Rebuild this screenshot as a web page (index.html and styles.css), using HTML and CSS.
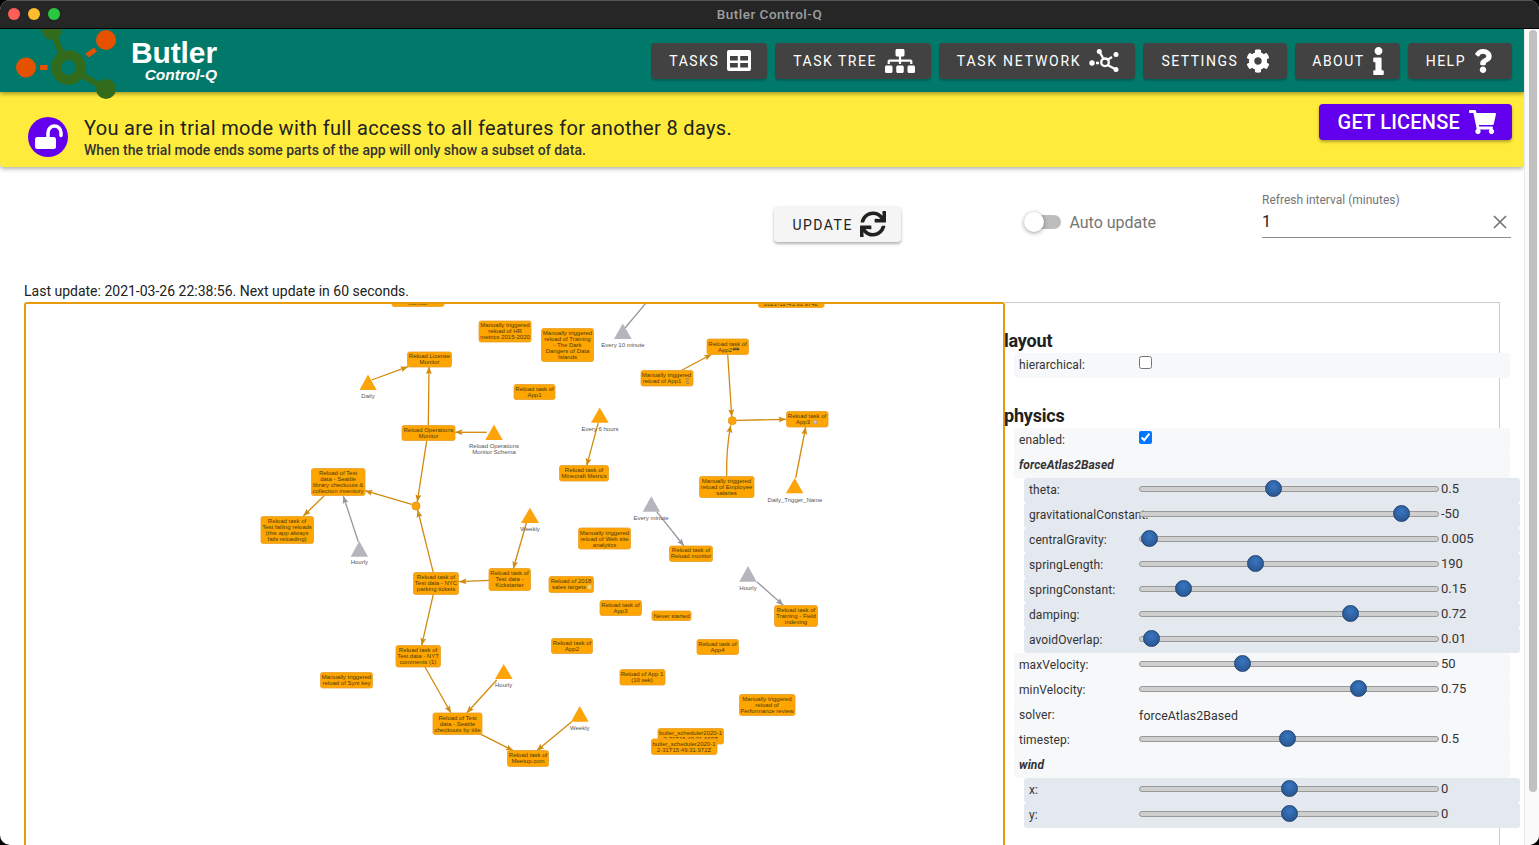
FILE: index.html
```html
<!DOCTYPE html>
<html lang="en">
<head>
    <meta charset="UTF-8">
    <title>Butler Control-Q</title>
    <link rel="stylesheet" href="styles.css">
</head>
<body>
<div class="window">
    <div class="titlebar">
        <div class="lights"><span class="light red"></span><span class="light yellow"></span><span class="light green"></span></div>
        <div class="window-title">Butler Control-Q</div>
    </div>
    <div class="client">
        <div class="page">
            <header class="appbar">
                <svg class="logo" viewBox="0 29 120 72" width="120" height="72">
                    <line x1="52" y1="30" x2="62" y2="55" class="logo-line"/>
                    <line x1="80" y1="74" x2="106" y2="89" class="logo-line"/>
                    <circle cx="52" cy="30" r="10" class="logo-green"/>
                    <circle cx="106" cy="89" r="10" class="logo-green"/>
                    <circle cx="68.500" cy="67.500" r="12.300" class="logo-ring"/>
                    <circle cx="106" cy="40" r="10" class="logo-orange"/>
                    <circle cx="26" cy="67.500" r="10" class="logo-orange"/>
                    <line x1="40" y1="67.500" x2="47.500" y2="67.500" class="logo-dash"/>
                    <line x1="87" y1="55.500" x2="95.500" y2="49.500" class="logo-dash"/>
                </svg>
                <div class="brand">
                    <div class="brand-name">Butler</div>
                    <div class="brand-sub">Control-Q</div>
                </div>
                <nav class="nav">
                    <button class="nav-btn">TASKS
                        <svg class="icon-table" viewBox="0 0 24 21"><path fill-rule="evenodd" d="M2 0h20a2 2 0 0 1 2 2v17a2 2 0 0 1-2 2H2a2 2 0 0 1-2-2V2a2 2 0 0 1 2-2zM3 6v4.500h7.800V6zm10.200 0v4.500H21V6zM3 13v4.500h7.800V13zm10.200 0v4.500H21V13z"/></svg>
                    </button>
                    <button class="nav-btn">TASK TREE
                        <svg class="icon-tree" viewBox="0 0 640 512"><path d="M128 352H32c-17.670 0-32 14.330-32 32v96c0 17.670 14.330 32 32 32h96c17.670 0 32-14.330 32-32v-96c0-17.670-14.330-32-32-32zm-24-80h192v48h48v-48h192v48h48v-57.590c0-21.170-17.230-38.410-38.410-38.410H344v-64h40c17.670 0 32-14.330 32-32V32c0-17.670-14.330-32-32-32H256c-17.670 0-32 14.330-32 32v96c0 17.670 14.330 32 32 32h40v64H94.410C73.230 224 56 241.230 56 262.410V320h48v-48zm264 80h-96c-17.670 0-32 14.330-32 32v96c0 17.670 14.330 32 32 32h96c17.670 0 32-14.330 32-32v-96c0-17.670-14.330-32-32-32zm240 0h-96c-17.670 0-32 14.330-32 32v96c0 17.670 14.330 32 32 32h96c17.670 0 32-14.330 32-32v-96c0-17.670-14.330-32-32-32z"/></svg>
                    </button>
                    <button class="nav-btn wide">TASK NETWORK
                        <svg class="icon-net" viewBox="0 0 30 23">
                            <circle cx="10.300" cy="2.500" r="2.500"/><circle cx="27" cy="5.500" r="2.500"/><circle cx="3" cy="14" r="2.700"/><circle cx="27" cy="20.500" r="2.500"/>
                            <path class="net-stroke" d="M10.300 2.500L14 9M18.500 16L27 20.500M19 10.500L23 8M7 14h3"/>
                            <circle class="net-stroke" cx="16" cy="13.300" r="3.800"/>
                        </svg>
                    </button>
                    <button class="nav-btn">SETTINGS
                        <svg class="icon-gear" viewBox="0 0 512 512"><path d="M487.400 315.700l-42.600-24.600c4.300-23.200 4.300-47 0-70.200l42.600-24.600c4.900-2.800 7.100-8.600 5.500-14-11.100-35.600-30-67.800-54.700-94.600-3.800-4.100-10-5.100-14.800-2.300L380.800 110c-17.900-15.400-38.500-27.300-60.800-35.100V25.800c0-5.600-3.900-10.500-9.400-11.700-36.700-8.200-74.300-7.800-109.200 0-5.500 1.200-9.400 6.100-9.400 11.700V75c-22.200 7.900-42.800 19.800-60.800 35.100L88.700 85.500c-4.900-2.800-11-1.900-14.800 2.300-24.700 26.700-43.600 58.900-54.700 94.600-1.700 5.400.6 11.200 5.500 14L67.300 221c-4.300 23.200-4.300 47 0 70.200l-42.600 24.600c-4.900 2.800-7.100 8.600-5.500 14 11.100 35.600 30 67.800 54.700 94.600 3.800 4.100 10 5.100 14.800 2.300l42.600-24.600c17.900 15.400 38.500 27.300 60.800 35.100v49.200c0 5.600 3.900 10.500 9.400 11.700 36.700 8.200 74.300 7.800 109.200 0 5.500-1.200 9.400-6.100 9.400-11.700v-49.200c22.200-7.900 42.800-19.800 60.800-35.100l42.600 24.600c4.900 2.800 11 1.900 14.800-2.300 24.700-26.700 43.600-58.900 54.700-94.600 1.500-5.500-.7-11.300-5.600-14.100zM256 336c-44.100 0-80-35.900-80-80s35.900-80 80-80 80 35.900 80 80-35.900 80-80 80z"/></svg>
                    </button>
                    <button class="nav-btn about">ABOUT
                        <svg class="icon-info" viewBox="0 0 192 512"><path d="M20 424.229h20V279.771H20c-11.046 0-20-8.954-20-20V212c0-11.046 8.954-20 20-20h112c11.046 0 20 8.954 20 20v212.229h20c11.046 0 20 8.954 20 20V492c0 11.046-8.954 20-20 20H20c-11.046 0-20-8.954-20-20v-47.771c0-11.046 8.954-20 20-20zM96 0C56.235 0 24 32.235 24 72s32.235 72 72 72 72-32.235 72-72S135.764 0 96 0z"/></svg>
                    </button>
                    <button class="nav-btn help">HELP
                        <svg class="icon-help" viewBox="0 0 384 512"><path d="M202.021 0C122.202 0 70.503 32.703 29.914 91.026c-7.363 10.580-5.093 25.086 5.178 32.874l43.138 32.709c10.373 7.865 25.132 6.026 33.253-4.148 25.049-31.381 43.630-49.449 82.757-49.449 30.764 0 68.816 19.799 68.816 49.631 0 22.552-18.617 34.134-48.993 51.164-35.423 19.860-82.299 44.576-82.299 106.405V320c0 13.255 10.745 24 24 24h72.471c13.255 0 24-10.745 24-24v-5.773c0-42.860 125.268-44.645 125.268-160.627C377.504 66.256 286.902 0 202.021 0zM192 373.459c-38.196 0-69.271 31.075-69.271 69.271 0 38.195 31.075 69.270 69.271 69.270s69.271-31.075 69.271-69.271-31.075-69.270-69.271-69.270z"/></svg>
                    </button>
                </nav>
            </header>

            <section class="banner">
                <div class="banner-badge">
                    <svg viewBox="0 0 40 40" width="40" height="40">
                        <path class="shackle" d="M20 23v-7.500a6.500 6.500 0 0 1 13 0v3"/>
                        <rect x="7" y="20" width="21" height="12" rx="2.500" class="lock-body"/>
                    </svg>
                </div>
                <div class="banner-text">
                    <div class="banner-title">You are in trial mode with full access to all features for another 8 days.</div>
                    <div class="banner-sub">When the trial mode ends some parts of the app will only show a subset of data.</div>
                </div>
                <button class="license-btn">GET LICENSE
                    <svg viewBox="0 0 576 512" width="27" height="24"><path d="M528.120 301.319l47.273-208C578.806 78.301 567.391 64 551.990 64H159.208l-9.166-44.810C147.758 8.021 137.930 0 126.529 0H24C10.745 0 0 10.745 0 24v16c0 13.255 10.745 24 24 24h69.883l70.248 343.435C147.325 417.100 136 435.222 136 456c0 30.928 25.072 56 56 56s56-25.072 56-56c0-15.674-6.447-29.835-16.824-40h209.647C430.447 426.165 424 440.326 424 456c0 30.928 25.072 56 56 56s56-25.072 56-56c0-22.172-12.888-41.332-31.579-50.405l5.517-24.276c3.413-15.018-8.002-29.319-23.403-29.319H218.117l-6.545-32h293.145c11.206 0 20.920-7.754 23.403-18.681z"/></svg>
                </button>
            </section>

            <section class="toolbar">
                <button class="update-btn"><span class="update-label">UPDATE</span>
                    <svg viewBox="0 0 512 512" width="26" height="26"><path d="M440.650 12.570l4 82.770A247.160 247.160 0 0 0 255.830 8C134.730 8 33.910 94.920 12.290 209.820A12 12 0 0 0 24.090 224h49.050a12 12 0 0 0 11.670-9.260 175.910 175.910 0 0 1 317-56.940l-101.460-4.860a12 12 0 0 0-12.570 12v47.410a12 12 0 0 0 12 12H500a12 12 0 0 0 12-12V12a12 12 0 0 0-12-12h-47.370a12 12 0 0 0-11.980 12.570zM255.830 432a175.610 175.610 0 0 1-146-77.800l101.800 4.870a12 12 0 0 0 12.570-12v-47.400a12 12 0 0 0-12-12H12a12 12 0 0 0-12 12V500a12 12 0 0 0 12 12h47.350a12 12 0 0 0 12-12.600l-4.150-82.570A247.170 247.170 0 0 0 255.830 504c121.110 0 221.930-86.920 243.550-201.820a12 12 0 0 0-11.800-14.180h-49.050a12 12 0 0 0-11.670 9.260A175.860 175.860 0 0 1 255.830 432z"/></svg>
                </button>
                <div class="auto-update">
                    <span class="switch"><span class="switch-thumb"></span></span>
                    <span class="auto-label">Auto update</span>
                </div>
                <div class="refresh-field">
                    <div class="refresh-label">Refresh interval (minutes)</div>
                    <div class="refresh-value">
                        <span>1</span>
                        <svg viewBox="0 0 14 14" width="14" height="14"><path d="M1 1l12 12M13 1L1 13"/></svg>
                    </div>
                </div>
            </section>

            <div class="status">Last update: 2021-03-26 22:38:56. Next update in 60 seconds.</div>

            <section class="workspace">
                <div class="graph">
                    <svg class="network" viewBox="26 304 977 560" width="977" height="560">
                        <defs>
                            <marker id="arrow" markerUnits="userSpaceOnUse" markerWidth="8" markerHeight="7" refX="7.500" refY="3.500" orient="auto"><path d="M0 0.500L7.500 3.500L0 6.500L1.500 3.500z" fill="#d18a0c"/></marker>
                            <marker id="arrow-gray" markerUnits="userSpaceOnUse" markerWidth="8" markerHeight="7" refX="7.500" refY="3.500" orient="auto"><path d="M0 0.500L7.500 3.500L0 6.500L1.500 3.500z" fill="#9696a0"/></marker>
                        </defs>

                        <g class="edges">
                            <path d="M371.700 380L408 366.700"/>
                            <path d="M428.300 425.700L429 366.700"/>
                            <path d="M486.700 432.300L455 432.300"/>
                            <path d="M426.700 440.700L417.300 502"/>
                            <path d="M411.700 504.300L365 490.700"/>
                            <path d="M324 496L303.300 516"/>
                            <path d="M433.300 572.700L417.700 510"/>
                            <path d="M526.700 521.700L513.300 568.700"/>
                            <path d="M489 580.300L459 581.700"/>
                            <path d="M433.300 594.300L421.700 645.300"/>
                            <path d="M425 667L451 713"/>
                            <path d="M496.700 680L466.700 713"/>
                            <path d="M481 734.300L513.300 750.700"/>
                            <path d="M571.700 721.700L536.700 750.700"/>
                            <path d="M598.300 422.700L586.700 465.700"/>
                            <path d="M681.700 370.300L711.700 354.300"/>
                            <path d="M727.700 354.300L731.700 416.700"/>
                            <path d="M736.700 420.300L786 419.300"/>
                            <path d="M726.700 476.300Q726 450 730.700 425.300"/>
                            <path d="M795.700 478L805.700 427"/>
                        </g>
                        <g class="edges gray">
                            <path d="M358.300 541.700L343.300 496"/>
                            <path d="M656.700 511.700L684 546"/>
                            <path d="M756.700 581.700L783.300 605.300"/>
                            <path class="plain" d="M625 328L646 303"/>
                        </g>

                        <circle class="dot" cx="416" cy="506" r="4"/>
                        <circle class="dot" cx="732.300" cy="420.700" r="4"/>

                        <g class="node">
                            <rect x="392" y="290" width="52" height="16.500" rx="2"/>
                            <text x="418" y="304.500">Monitor</text>
                            <rect x="758.500" y="290" width="65.500" height="17.500" rx="2"/>
                            <text x="791" y="305.500">2021-12-45:31.974Z</text>
                            <rect x="479" y="321" width="52" height="21" rx="2"/>
                            <text x="505" y="327">Manually triggered<tspan x="505" dy="6">reload of HR</tspan><tspan x="505" dy="6">metrics 2015-2020</tspan></text>
                            <rect x="541.500" y="328.500" width="52" height="33" rx="2"/>
                            <text x="567.500" y="335">Manually triggered<tspan x="567.500" dy="6">reload of Training</tspan><tspan x="567.500" dy="6">- The Dark</tspan><tspan x="567.500" dy="6">Dangers of Data</tspan><tspan x="567.500" dy="6">Islands</tspan></text>
                            <rect x="707" y="339" width="41.500" height="15.500" rx="2"/>
                            <text x="727.500" y="345.500">Reload task of<tspan x="725" dy="6">App2</tspan></text>
                            <rect x="407.500" y="352" width="44" height="15" rx="2"/>
                            <text x="429.500" y="358">Reload License<tspan x="429.500" dy="6">Monitor</tspan></text>
                            <rect x="641" y="370.500" width="52" height="15.500" rx="2"/>
                            <text x="666.500" y="376.500">Manually triggered<tspan x="662" dy="6">reload of App1</tspan></text>
                            <rect x="514" y="384.500" width="41" height="15" rx="2"/>
                            <text x="534.500" y="391">Reload task of<tspan x="534.500" dy="6">App1</tspan></text>
                            <rect x="786.500" y="411.500" width="41.500" height="15.500" rx="2"/>
                            <text x="807" y="418">Reload task of<tspan x="803" dy="6">App3</tspan></text>
                            <rect x="402" y="425.500" width="53" height="15" rx="2"/>
                            <text x="428.500" y="432">Reload Operations<tspan x="428.500" dy="6">Monitor</tspan></text>
                            <rect x="559.500" y="465.500" width="49" height="15.500" rx="2"/>
                            <text x="584" y="472">Reload task of<tspan x="584" dy="6">Minecraft Metrics</tspan></text>
                            <rect x="311.500" y="468.500" width="53.500" height="27" rx="2"/>
                            <text x="338" y="474.500">Reload of Test<tspan x="338" dy="6">data - Seattle</tspan><tspan x="338" dy="6">library checkouts &amp;</tspan><tspan x="338" dy="6">collection inventory</tspan></text>
                            <rect x="699.500" y="476.500" width="54.500" height="21" rx="2"/>
                            <text x="726.500" y="483">Manually triggered<tspan x="726.500" dy="6">reload of Employee</tspan><tspan x="726.500" dy="6">salaries</tspan></text>
                            <rect x="261" y="516.500" width="52.500" height="27" rx="2"/>
                            <text x="287" y="523">Reload task of<tspan x="287" dy="6">Test failing reloads</tspan><tspan x="287" dy="6">(this app always</tspan><tspan x="287" dy="6">fails reloading)</tspan></text>
                            <rect x="578.500" y="528" width="52" height="21" rx="2"/>
                            <text x="604.500" y="534.500">Manually triggered<tspan x="604.500" dy="6">reload of Web site</tspan><tspan x="604.500" dy="6">analytics</tspan></text>
                            <rect x="669.500" y="546" width="43" height="15.500" rx="2"/>
                            <text x="691" y="552">Reload task of<tspan x="691" dy="6">Reload monitor</tspan></text>
                            <rect x="489" y="568.500" width="41.500" height="22" rx="2"/>
                            <text x="509.500" y="575">Reload task of<tspan x="509.500" dy="6">Test data -</tspan><tspan x="509.500" dy="6">Kickstarter</tspan></text>
                            <rect x="413.500" y="572.500" width="45" height="22" rx="2"/>
                            <text x="436" y="579">Reload task of<tspan x="436" dy="6">Test data - NYC</tspan><tspan x="436" dy="6">parking tickets</tspan></text>
                            <rect x="549" y="576.500" width="44.500" height="16" rx="2"/>
                            <text x="571" y="583">Reload of 2018<tspan x="569" dy="6">sales targets</tspan></text>
                            <rect x="600" y="600.500" width="41.500" height="15" rx="2"/>
                            <text x="620.500" y="607">Reload task of<tspan x="620.500" dy="6">App3</tspan></text>
                            <rect x="774.500" y="605.500" width="43" height="21" rx="2"/>
                            <text x="796" y="611.500">Reload task of<tspan x="796" dy="6">Training - Field</tspan><tspan x="796" dy="6">indexing</tspan></text>
                            <rect x="652" y="611" width="39" height="9.500" rx="2"/>
                            <text x="671.500" y="617.500">Never started</text>
                            <rect x="551.500" y="638.500" width="41" height="15" rx="2"/>
                            <text x="572" y="645">Reload task of<tspan x="572" dy="6">App2</tspan></text>
                            <rect x="697" y="639.500" width="41.500" height="15" rx="2"/>
                            <text x="717.500" y="646">Reload task of<tspan x="717.500" dy="6">App4</tspan></text>
                            <rect x="396" y="645.500" width="44.500" height="21.500" rx="2"/>
                            <text x="418" y="652">Reload task of<tspan x="418" dy="6">Test data - NYT</tspan><tspan x="418" dy="6">comments (1)</tspan></text>
                            <rect x="620" y="669.500" width="45" height="15.500" rx="2"/>
                            <text x="642" y="676">Reload of App 1<tspan x="642" dy="6">(10 sek)</tspan></text>
                            <rect x="320.500" y="672.500" width="52" height="15.500" rx="2"/>
                            <text x="346.500" y="679">Manually triggered<tspan x="346.500" dy="6">reload of Synt key</tspan></text>
                            <rect x="739.500" y="694.500" width="55.500" height="21" rx="2"/>
                            <text x="767" y="701">Manually triggered<tspan x="767" dy="6">reload of</tspan><tspan x="767" dy="6">Performance review</tspan></text>
                            <rect x="433" y="713" width="49" height="21.500" rx="2"/>
                            <text x="457.500" y="719.500">Reload of Test<tspan x="457.500" dy="6">data - Seattle</tspan><tspan x="457.500" dy="6">checkouts by title</tspan></text>
                            <rect x="658" y="728.500" width="65.500" height="15.500" rx="2"/>
                            <text x="690.500" y="735">butler_scheduler2020-1<tspan x="690.500" dy="6">2-31T15:49:31.669Z</tspan></text>
                            <rect x="651.500" y="739" width="65.500" height="15.500" rx="2"/>
                            <text x="684" y="745.500">butler_scheduler2020-1<tspan x="684" dy="6">2-31T15:49:31.972Z</tspan></text>
                            <rect x="507.500" y="750.500" width="41" height="16" rx="2"/>
                            <text x="528" y="757">Reload task of<tspan x="528" dy="6">Meetup.com</tspan></text>
                        </g>

                        <!-- small emoji in the node names -->
                        <path d="M733 348h6M733 348.500v1.500h2.500v-1.500M736.500 348.500v1.500h2.500v-1.500" class="emoji-dark"/>
                        <path d="M686 378.500h3l-3 5h3z" class="emoji-glass"/>
                        <circle cx="815" cy="422" r="2" class="emoji-gray"/>
                        <circle cx="589.500" cy="587" r="2.200" class="emoji-yellow"/>

                        <g class="trigger">
                            <polygon points="368,374.500 359.500,390 376.700,390"/>
                            <text x="368" y="397.500">Daily</text>
                            <polygon points="494,424.500 485.300,440 502.700,440"/>
                            <text x="494" y="448">Reload Operations<tspan x="494" dy="6">Monitor Schema</tspan></text>
                            <polygon points="599.700,407.500 591,422.700 608.700,422.700"/>
                            <text x="600" y="431">Every 6 hours</text>
                            <polygon points="794.700,478 786,493.300 803.300,493.300"/>
                            <text x="795" y="502">Daily_Trigger_Name</text>
                            <polygon points="530,507.700 521,523 539,523"/>
                            <text x="530" y="531">Weekly</text>
                            <polygon points="503.700,664 495,679 512.700,679"/>
                            <text x="503.700" y="687">Hourly</text>
                            <polygon points="579.700,706 571,721.700 588.700,721.700"/>
                            <text x="579.700" y="730">Weekly</text>
                        </g>
                        <g class="trigger off">
                            <polygon points="622.700,323.500 614,339 631.700,339"/>
                            <text x="623" y="347">Every 10 minute</text>
                            <polygon points="651.300,496.300 642.700,511.700 660,511.700"/>
                            <text x="651" y="520">Every minute</text>
                            <polygon points="359.300,541 350.700,556.700 368,556.700"/>
                            <text x="359.300" y="564">Hourly</text>
                            <polygon points="748,566 739.300,581.700 756.700,581.700"/>
                            <text x="748" y="590">Hourly</text>
                        </g>
                    </svg>
                </div>

                <div class="config">
                    <h3 class="config-head first">layout</h3>
                    <div class="row"><span class="row-label">hierarchical:</span><input type="checkbox"></div>
                    <h3 class="config-head">physics</h3>
                    <div class="row"><span class="row-label">enabled:</span><input type="checkbox" checked></div>
                    <div class="row"><span class="row-label group">forceAtlas2Based</span></div>
                    <div class="row sub"><span class="row-label">theta:</span><input type="range" value="44.400"><span class="row-value">0.5</span></div>
                    <div class="row sub"><span class="row-label">gravitationalConstant:</span><input type="range" value="90.100"><span class="row-value">-50</span></div>
                    <div class="row sub"><span class="row-label">centralGravity:</span><input type="range" value="0.300"><span class="row-value">0.005</span></div>
                    <div class="row sub"><span class="row-label">springLength:</span><input type="range" value="38"><span class="row-value">190</span></div>
                    <div class="row sub"><span class="row-label">springConstant:</span><input type="range" value="12.400"><span class="row-value">0.15</span></div>
                    <div class="row sub"><span class="row-label">damping:</span><input type="range" value="71.900"><span class="row-value">0.72</span></div>
                    <div class="row sub"><span class="row-label">avoidOverlap:</span><input type="range" value="1"><span class="row-value">0.01</span></div>
                    <div class="row"><span class="row-label">maxVelocity:</span><input type="range" value="33.500"><span class="row-value">50</span></div>
                    <div class="row"><span class="row-label">minVelocity:</span><input type="range" value="74.600"><span class="row-value">0.75</span></div>
                    <div class="row"><span class="row-label">solver:</span><span class="row-text">forceAtlas2Based</span></div>
                    <div class="row"><span class="row-label">timestep:</span><input type="range" value="49.300"><span class="row-value">0.5</span></div>
                    <div class="row"><span class="row-label group">wind</span></div>
                    <div class="row sub"><span class="row-label">x:</span><input type="range" value="50"><span class="row-value">0</span></div>
                    <div class="row sub"><span class="row-label">y:</span><input type="range" value="50"><span class="row-value">0</span></div>
                </div>
            </section>
        </div>
        <div class="scrollbar"><div class="scroll-thumb"></div></div>
    </div>
</div>
</body>
</html>
```

FILE: styles.css
```css
* { box-sizing: border-box; }
html, body { margin: 0; height: 100%; overflow: hidden; background: #000; }
body { font-family: Roboto, "Liberation Sans", sans-serif; color: #212121; }
button { font-family: inherit; border: none; }

.window { height: 845px; border-radius: 10px; overflow: hidden; background: #fff; display: flex; flex-direction: column; }

/* mac title bar */
.titlebar { height: 29px; flex: none; background: #262626; border-top: 1px solid #555; border-bottom: 1px solid #000; position: relative; display: flex; align-items: center; justify-content: center; padding-bottom: 2px; }
.lights { position: absolute; left: 8px; top: 7px; display: flex; gap: 8px; }
.light { width: 12px; height: 12px; border-radius: 50%; }
.red { background: #ff5f57; }
.yellow { background: #febc2e; }
.green { background: #28c840; }
.window-title { font-size: 13.500px; font-weight: 500; color: #9e9e9e; letter-spacing: 0.500px; }

.client { flex: 1; display: flex; min-height: 0; }
.page { width: 1524px; flex: none; overflow: hidden; }
.scrollbar { flex: 1; background: #fafafa; border-left: 1px solid #e8e8e8; padding: 1px 2px 0 4px; }
.scroll-thumb { height: 762px; background: #c1c1c1; border-radius: 5px; }

/* app bar */
.appbar { height: 63px; background: #00796b; display: flex; align-items: center; position: relative; z-index: 2; box-shadow: 0 2px 4px rgba(0,0,0,0.35); }
.logo { position: absolute; left: 0; top: 0; z-index: 3; }
.logo-line { stroke: #336b1c; stroke-width: 6; }
.logo-green { fill: #336b1c; }
.logo-ring { fill: none; stroke: #336b1c; stroke-width: 9.700; }
.logo-orange { fill: #e65100; }
.logo-dash { stroke: #e65100; stroke-width: 5; }
.brand { margin-left: 130px; width: 87px; color: #fff; font-family: "Liberation Sans", Arial, sans-serif; font-weight: 700; text-align: right; }
.brand-name { font-size: 30px; line-height: 30px; margin-top: -1px; letter-spacing: -0.100px; }
.brand-sub { font-size: 15.500px; line-height: 15px; font-style: italic; margin-top: -1px; }
.nav { margin-left: auto; margin-right: 12px; display: flex; gap: 8px; }
.nav-btn { height: 36px; padding: 0 16px 0 18px; background: #424242; color: #fff; border-radius: 4px; font-size: 14px; letter-spacing: 1.500px; display: flex; align-items: center; gap: 8px; box-shadow: 0 2px 2px rgba(0,0,0,0.2); }
.nav-btn svg { fill: #fff; display: block; }
.nav-btn.wide { letter-spacing: 1.750px; }
.nav-btn.about { padding-left: 17px; }
.nav-btn.help { padding-right: 20px; }
.icon-table { width: 24px; height: 21px; }
.icon-tree { width: 30px; height: 24px; }
.icon-net { width: 30px; height: 23px; }
.icon-gear { width: 24px; height: 24px; margin-right: 1px; }
.icon-info { width: 11px; height: 28px; }
.icon-help { width: 18px; height: 24px; }
.nav-btn svg .net-stroke { fill: none; stroke: #fff; stroke-width: 2.300; }

/* trial banner */
.banner { height: 75px; background: #ffeb3b; border-radius: 0 0 4px 4px; box-shadow: 0 2px 4px rgba(0,0,0,0.3); display: flex; padding: 12px 12px 0 28px; position: relative; z-index: 1; }
.banner-badge { width: 40px; height: 40px; margin-top: 13px; border-radius: 50%; background: #6200ee; flex: none; }
.shackle { fill: none; stroke: #fff; stroke-width: 3.500; stroke-linecap: round; }
.lock-body { fill: #fff; }
.banner-text { margin-left: 16px; padding-top: 12px; }
.banner-title { font-size: 20px; line-height: 24px; letter-spacing: 0.330px; }
.banner-sub { font-size: 14px; line-height: 20px; font-weight: 500; color: #333; letter-spacing: 0.030px; }
.license-btn { margin-left: auto; height: 36px; padding: 0 16px 0 19px; background: #6200ee; color: #fff; border-radius: 4px; font-size: 20px; font-weight: 500; letter-spacing: 0.200px; display: flex; align-items: center; gap: 9px; box-shadow: 0 2px 3px rgba(0,0,0,0.3); }
.license-btn svg { fill: #fff; }

/* update controls */
.toolbar { height: 116px; padding-right: 13px; display: flex; justify-content: flex-end; align-items: flex-start; }
.update-btn { margin-top: 39px; height: 36px; width: 127px; padding: 0 15px 0 18px; background: #f5f5f5; color: #212121; border-radius: 4px; font-size: 14px; letter-spacing: 1.500px; display: flex; align-items: center; justify-content: space-between; box-shadow: 0 2px 3px rgba(0,0,0,0.3); }
.update-btn svg { fill: #212121; }
.update-label { padding-top: 2px; }
.auto-update { margin: 44px 106px 0 121px; display: flex; align-items: center; gap: 8px; height: 22px; }
.switch { width: 36px; height: 14px; margin-left: 3px; background: #bdbdbd; border-radius: 7px; position: relative; }
.switch-thumb { position: absolute; left: -1px; top: -3px; width: 20px; height: 20px; border-radius: 50%; background: #fff; box-shadow: 0 1px 4px rgba(0,0,0,0.4); }
.auto-label { font-size: 16px; color: #757575; }
.refresh-field { width: 249px; margin-top: 26px; }
.refresh-label { font-size: 12px; line-height: 14px; color: #757575; }
.refresh-value { height: 30px; margin-top: 1px; padding: 0 4px 2px 0; border-bottom: 1px solid #8c8c8c; display: flex; align-items: center; justify-content: space-between; font-size: 16px; }
.refresh-value svg { fill: none; stroke: #757575; stroke-width: 1.700; }

.status { padding-left: 24px; height: 19px; font-size: 14px; line-height: 16px; }

/* network graph */
.workspace { display: flex; align-items: flex-start; padding-left: 24px; }
.graph { width: 981px; height: 600px; flex: none; border: 2px solid #e79a0e; border-radius: 3px; background: #fff; }
.network { display: block; font-family: "Liberation Sans", Arial, sans-serif; font-size: 6px; }
.network text { text-anchor: middle; }
.edges path { fill: none; stroke: #d18a0c; stroke-width: 1.300; marker-end: url(#arrow); }
.edges.gray path { stroke: #9696a0; marker-end: url(#arrow-gray); }
.edges.gray path.plain { marker-end: none; }
.dot { fill: #fca40a; stroke: #e79a0e; }
.node rect { fill: #ffa500; stroke: #e8a02a; stroke-width: 0.800; }
.node text { fill: #4a3a12; }
.trigger polygon { fill: #fca40a; }
.trigger text { fill: #555; }
.trigger.off polygon { fill: #b5b5bd; }
.emoji-dark { fill: #444; stroke: #444; stroke-width: 0.500; }
.emoji-glass { fill: none; stroke: #9a8a60; stroke-width: 0.800; }
.emoji-gray { fill: #c9c4b8; stroke: #8a8a8a; stroke-width: 0.500; }
.emoji-yellow { fill: #f0d070; stroke: #bbb; stroke-width: 0.500; }

/* physics config panel */
.config { width: 495px; height: 600px; flex: none; border: 1px solid #ccc; border-left: none; }
.config-head { margin: 0 0 0 -1px; height: 25px; font-size: 18px; line-height: 25px; font-weight: 700; letter-spacing: -0.200px; }
.config-head.first { margin-top: 25px; }
.row + .config-head { margin-top: 25px; }
.row { width: 496px; height: 25px; margin-left: 9px; padding-left: 5px; background: #f7f8fa; border-radius: 3px; display: flex; align-items: center; font-size: 13px; color: #333; position: relative; }
.row.sub { margin-left: 19px; padding-left: 5px; background: #e4e8ef; }
.row-label { width: 120px; flex: none; white-space: nowrap; font-size: 12px; letter-spacing: 0.100px; margin-top: -1px; }
.row.sub .row-label { width: 110px; }
.row-label.group { font-style: italic; font-weight: 700; width: auto; }
.row-text { font-size: 12.300px; letter-spacing: 0.100px; color: #333; }
.row-value { margin-left: 2px; margin-top: -4px; }
.row input[type=checkbox] { margin: 0 0 6px; width: 13px; height: 13px; }
.row input[type=range] { -webkit-appearance: none; appearance: none; width: 300px; height: 17px; margin: -4px 0 0; background: transparent; flex: none; }
.row input[type=range]::-webkit-slider-runnable-track { height: 6px; background: #cfcfcf; border: 1px solid #999; border-radius: 3px; }
.row input[type=range]::-webkit-slider-thumb { -webkit-appearance: none; width: 17px; height: 17px; margin-top: -6.500px; border-radius: 50%; background: radial-gradient(circle at 50% 35%, #3876c2, #2c5a96 70%); border: 1px solid #1f4474; }
```
